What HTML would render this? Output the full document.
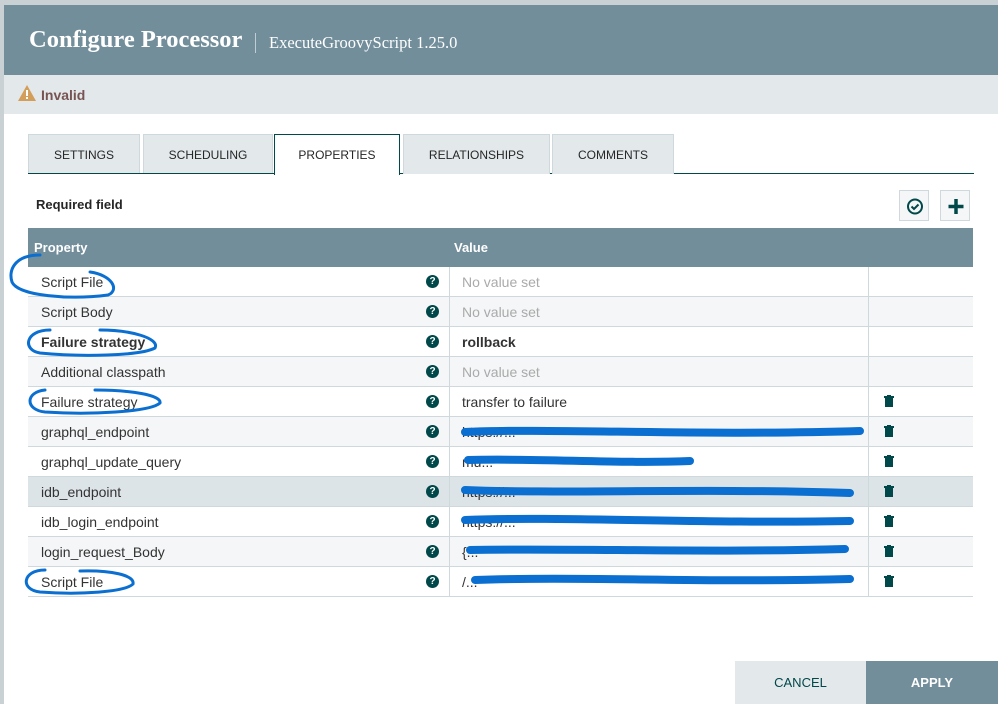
<!DOCTYPE html>
<html><head><style>
*{margin:0;padding:0;box-sizing:border-box}
body{width:998px;height:704px;background:#c9d1d5;position:relative;overflow:hidden;font-family:"Liberation Sans",sans-serif}
.dlg{position:absolute;left:4px;top:5px;width:994px;height:699px;background:#fff}
.hdr{position:absolute;left:0;top:0;width:994px;height:70px;background:#728e9b;color:#fff}
.hdr .t{position:absolute;left:25px;top:21px;font-family:"Liberation Serif",serif;font-weight:bold;font-size:24.5px}
.hdr .sep{position:absolute;left:251px;top:28px;width:1px;height:20px;background:#c0ced4}
.hdr .s{position:absolute;left:265px;top:28px;font-family:"Liberation Serif",serif;font-size:16.5px}
.inv{position:absolute;left:0;top:70px;width:994px;height:39px;background:#e3e8eb}
.inv span{position:absolute;left:37px;top:12px;font-size:14px;font-weight:bold;color:#775351}
.tab{position:absolute;top:129px;height:40px;background:#e3e8eb;border:1px solid #cfd8dc;border-bottom:none;font-size:12px;color:#262626;text-align:center;line-height:40px}
.tab.a{background:#fff;border:1px solid #004849;border-bottom:none;height:41px}
.tline{position:absolute;left:24px;top:168px;width:946px;height:1px;background:#004849}
.req{position:absolute;left:32px;top:192px;font-size:13px;font-weight:bold;color:#262626}
.btn{position:absolute;top:185px;width:30px;height:31px;border:1px solid #cfd8dc;background:#f4f6f7}
.th{position:absolute;left:24px;top:223px;width:945px;height:39px;background:#728e9b;color:#fff;font-weight:bold;font-size:13px}
.row{position:absolute;left:24px;width:945px;height:30px;border-bottom:1px solid #cfd8dc;font-size:14px;color:#333}
.row .p{position:absolute;left:13px;top:7px}
.row .q{position:absolute;left:398px;top:8px;width:13px;height:13px;border-radius:50%;background:#004849;color:#fff;font-size:10px;font-weight:bold;text-align:center;line-height:13px}
.row .v{position:absolute;left:421px;top:0;width:420px;height:29px;border-left:1px solid #cfd8dc;border-right:1px solid #cfd8dc;padding:7px 0 0 12px}
.nv{color:#aaa}
.tr{position:absolute;left:856px;top:8px;width:10px;height:12px}
.cancel{position:absolute;left:731px;top:656px;width:131px;height:43px;background:#e3e8eb;color:#004849;font-size:13px;text-align:center;line-height:43px}
.apply{position:absolute;left:862px;top:656px;width:132px;height:43px;background:#728e9b;color:#fff;font-size:13px;text-align:center;line-height:43px;font-weight:bold}
</style></head><body>
<div class="dlg">
<div class="hdr"><div class="t">Configure Processor</div><div class="sep"></div><div class="s">ExecuteGroovyScript 1.25.0</div></div>
<div class="inv"><svg style="position:absolute;left:14px;top:10px" width="18" height="16" viewBox="0 0 18 16"><path d="M9 0L18 16H0Z" fill="#d39e5a"/><rect x="8" y="5" width="2" height="6" fill="#fff"/><rect x="8" y="12" width="2" height="2" fill="#fff"/></svg><span>Invalid</span></div>
<div class="tab" style="left:24px;width:112px">SETTINGS</div>
<div class="tab" style="left:139px;width:130px">SCHEDULING</div>
<div class="tline"></div>
<div class="tab a" style="left:270px;width:126px">PROPERTIES</div>
<div class="tab" style="left:399px;width:147px">RELATIONSHIPS</div>
<div class="tab" style="left:548px;width:122px">COMMENTS</div>
<div class="req">Required field</div>
<div class="btn" style="left:895px"><svg width="30" height="31" viewBox="0 0 30 31"><circle cx="15" cy="15.5" r="7" fill="none" stroke="#004849" stroke-width="2"/><path d="M11.5 15.5l2.5 2.5 4.5-4.5" fill="none" stroke="#004849" stroke-width="2"/></svg></div>
<div class="btn" style="left:936px"><svg width="30" height="31" viewBox="0 0 30 31"><path d="M15 8v15M7.5 15.5h15" stroke="#004849" stroke-width="3.5"/></svg></div>
<div class="th"><span style="position:absolute;left:6px;top:12px">Property</span><span style="position:absolute;left:426px;top:12px">Value</span></div>
<div class="row" style="top:262px;background:#fff"><span class="p">Script File</span><span class="q">?</span><div class="v nv">No value set</div></div>
<div class="row" style="top:292px;background:#f4f6f7"><span class="p">Script Body</span><span class="q">?</span><div class="v nv">No value set</div></div>
<div class="row" style="top:322px;background:#fff"><span class="p" style="font-weight:bold">Failure strategy</span><span class="q">?</span><div class="v" style="font-weight:bold">rollback</div></div>
<div class="row" style="top:352px;background:#f4f6f7"><span class="p">Additional classpath</span><span class="q">?</span><div class="v nv">No value set</div></div>
<div class="row" style="top:382px;background:#fff"><span class="p">Failure strategy</span><span class="q">?</span><div class="v">transfer to failure</div><svg class="tr" viewBox="0 0 10 12"><path d="M0 1h10v2H0zM3 0h4v1H3zM1 3h8v9H1z" fill="#004849"/></svg></div>
<div class="row" style="top:412px;background:#f4f6f7"><span class="p">graphql_endpoint</span><span class="q">?</span><div class="v">https://...</div><svg class="tr" viewBox="0 0 10 12"><path d="M0 1h10v2H0zM3 0h4v1H3zM1 3h8v9H1z" fill="#004849"/></svg></div>
<div class="row" style="top:442px;background:#fff"><span class="p">graphql_update_query</span><span class="q">?</span><div class="v">mu...</div><svg class="tr" viewBox="0 0 10 12"><path d="M0 1h10v2H0zM3 0h4v1H3zM1 3h8v9H1z" fill="#004849"/></svg></div>
<div class="row" style="top:472px;background:#dde4e8"><span class="p">idb_endpoint</span><span class="q">?</span><div class="v">https://...</div><svg class="tr" viewBox="0 0 10 12"><path d="M0 1h10v2H0zM3 0h4v1H3zM1 3h8v9H1z" fill="#004849"/></svg></div>
<div class="row" style="top:502px;background:#fff"><span class="p">idb_login_endpoint</span><span class="q">?</span><div class="v">https://...</div><svg class="tr" viewBox="0 0 10 12"><path d="M0 1h10v2H0zM3 0h4v1H3zM1 3h8v9H1z" fill="#004849"/></svg></div>
<div class="row" style="top:532px;background:#f4f6f7"><span class="p">login_request_Body</span><span class="q">?</span><div class="v">{...</div><svg class="tr" viewBox="0 0 10 12"><path d="M0 1h10v2H0zM3 0h4v1H3zM1 3h8v9H1z" fill="#004849"/></svg></div>
<div class="row" style="top:562px;background:#fff"><span class="p">Script File</span><span class="q">?</span><div class="v">/...</div><svg class="tr" viewBox="0 0 10 12"><path d="M0 1h10v2H0zM3 0h4v1H3zM1 3h8v9H1z" fill="#004849"/></svg></div>
<div class="cancel">CANCEL</div><div class="apply">APPLY</div>
</div>
<svg style="position:absolute;left:0;top:0" width="998" height="704" fill="none" stroke="#0a6fd0" stroke-linecap="round">
<g stroke-width="3">
<path d="M40 255C15 255 8 270 12 282C18 296 70 300 108 295C120 290 112 275 90 272"/>
<path d="M50 330C25 330 22 350 40 353C80 357 140 356 155 348C160 338 130 330 100 330"/>
<path d="M45 390C25 392 25 410 45 412C90 415 150 412 160 403C162 395 130 390 95 390"/>
<path d="M45 570C22 570 20 590 40 592C80 595 125 592 133 584C135 575 110 570 80 571"/>
</g>
<g stroke-width="8">
<path d="M465 432C550 428 700 436 860 431"/>
<path d="M468 460C540 458 620 464 690 461"/>
<path d="M465 490C560 494 700 488 850 493"/>
<path d="M465 520C560 516 700 524 850 521"/>
<path d="M470 550C580 548 700 553 845 549"/>
<path d="M475 580C580 576 700 583 850 579"/>
</g>
</svg>
</body></html>
